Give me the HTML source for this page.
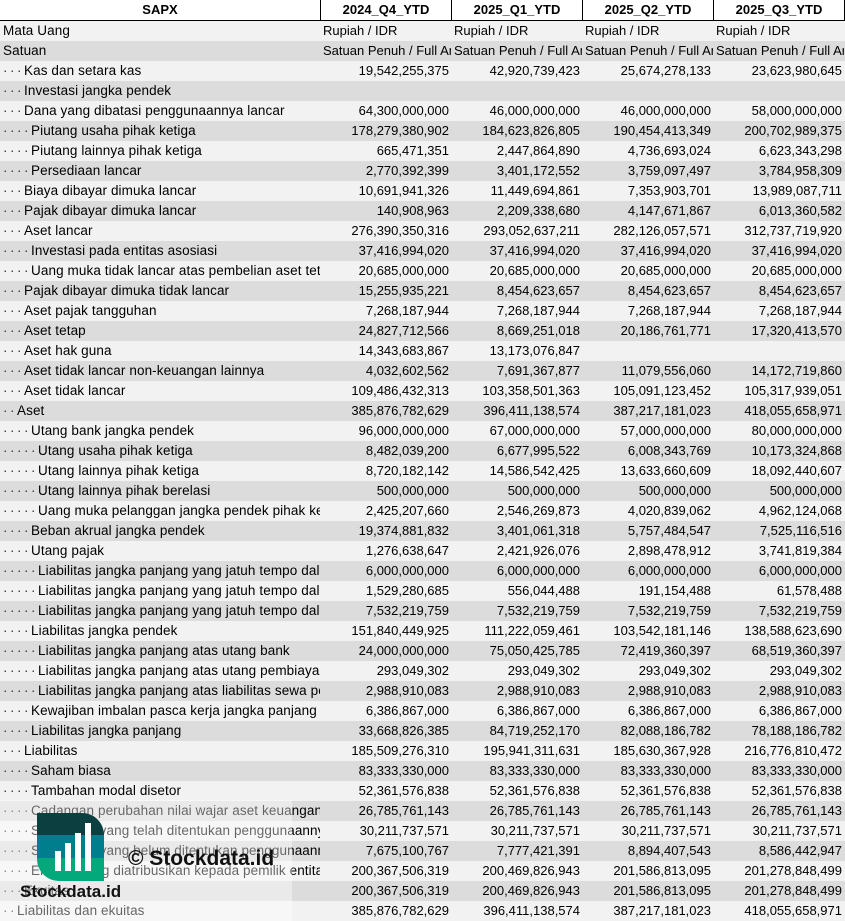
<!DOCTYPE html>
<html><head><meta charset="utf-8"><style>
*{margin:0;padding:0;box-sizing:border-box}
body{width:845px;height:921px;overflow:hidden;background:#fff;font-family:"Liberation Sans",sans-serif;font-size:13px;color:#000;position:relative}
.r{display:flex;height:20px;line-height:20px;white-space:nowrap}
.r:nth-child(odd){background:#f2f2f2}
.r:nth-child(even){background:#dcdcdc}
.l{width:320px;overflow:hidden;padding-left:3px;font-size:13.5px;letter-spacing:0.1px}
.v{width:131px;overflow:hidden;text-align:right;padding-right:2px}
.v.al{text-align:left;padding-left:3px;padding-right:0}
.d{display:inline-block;width:7px;color:#333}
.h{display:flex;height:21px;line-height:20px;font-weight:bold;border-bottom:1.5px solid #000;background:#fff}
.h div{text-align:center;border-right:1px solid #000}
.ov{position:absolute;left:0;top:800px;width:292px;height:121px;background:rgba(255,255,255,0.4)}
</style></head><body>
<div class="h"><div style="width:321px">SAPX</div><div style="width:131px">2024_Q4_YTD</div><div style="width:131px">2025_Q1_YTD</div><div style="width:131px">2025_Q2_YTD</div><div style="width:131px">2025_Q3_YTD</div></div>
<div id="t">
<div class="r"><div class="l">Mata Uang</div><div class="v al">Rupiah / IDR</div><div class="v al">Rupiah / IDR</div><div class="v al">Rupiah / IDR</div><div class="v al">Rupiah / IDR</div></div>
<div class="r"><div class="l">Satuan</div><div class="v al">Satuan Penuh / Full Amount</div><div class="v al">Satuan Penuh / Full Amount</div><div class="v al">Satuan Penuh / Full Amount</div><div class="v al">Satuan Penuh / Full Amount</div></div>
<div class="r"><div class="l"><span class="d">·</span><span class="d">·</span><span class="d">·</span>Kas dan setara kas</div><div class="v">19,542,255,375</div><div class="v">42,920,739,423</div><div class="v">25,674,278,133</div><div class="v">23,623,980,645</div></div>
<div class="r"><div class="l"><span class="d">·</span><span class="d">·</span><span class="d">·</span>Investasi jangka pendek</div><div class="v"></div><div class="v"></div><div class="v"></div><div class="v"></div></div>
<div class="r"><div class="l"><span class="d">·</span><span class="d">·</span><span class="d">·</span>Dana yang dibatasi penggunaannya lancar</div><div class="v">64,300,000,000</div><div class="v">46,000,000,000</div><div class="v">46,000,000,000</div><div class="v">58,000,000,000</div></div>
<div class="r"><div class="l"><span class="d">·</span><span class="d">·</span><span class="d">·</span><span class="d">·</span>Piutang usaha pihak ketiga</div><div class="v">178,279,380,902</div><div class="v">184,623,826,805</div><div class="v">190,454,413,349</div><div class="v">200,702,989,375</div></div>
<div class="r"><div class="l"><span class="d">·</span><span class="d">·</span><span class="d">·</span><span class="d">·</span>Piutang lainnya pihak ketiga</div><div class="v">665,471,351</div><div class="v">2,447,864,890</div><div class="v">4,736,693,024</div><div class="v">6,623,343,298</div></div>
<div class="r"><div class="l"><span class="d">·</span><span class="d">·</span><span class="d">·</span><span class="d">·</span>Persediaan lancar</div><div class="v">2,770,392,399</div><div class="v">3,401,172,552</div><div class="v">3,759,097,497</div><div class="v">3,784,958,309</div></div>
<div class="r"><div class="l"><span class="d">·</span><span class="d">·</span><span class="d">·</span>Biaya dibayar dimuka lancar</div><div class="v">10,691,941,326</div><div class="v">11,449,694,861</div><div class="v">7,353,903,701</div><div class="v">13,989,087,711</div></div>
<div class="r"><div class="l"><span class="d">·</span><span class="d">·</span><span class="d">·</span>Pajak dibayar dimuka lancar</div><div class="v">140,908,963</div><div class="v">2,209,338,680</div><div class="v">4,147,671,867</div><div class="v">6,013,360,582</div></div>
<div class="r"><div class="l"><span class="d">·</span><span class="d">·</span><span class="d">·</span>Aset lancar</div><div class="v">276,390,350,316</div><div class="v">293,052,637,211</div><div class="v">282,126,057,571</div><div class="v">312,737,719,920</div></div>
<div class="r"><div class="l"><span class="d">·</span><span class="d">·</span><span class="d">·</span><span class="d">·</span>Investasi pada entitas asosiasi</div><div class="v">37,416,994,020</div><div class="v">37,416,994,020</div><div class="v">37,416,994,020</div><div class="v">37,416,994,020</div></div>
<div class="r"><div class="l"><span class="d">·</span><span class="d">·</span><span class="d">·</span><span class="d">·</span>Uang muka tidak lancar atas pembelian aset tetap</div><div class="v">20,685,000,000</div><div class="v">20,685,000,000</div><div class="v">20,685,000,000</div><div class="v">20,685,000,000</div></div>
<div class="r"><div class="l"><span class="d">·</span><span class="d">·</span><span class="d">·</span>Pajak dibayar dimuka tidak lancar</div><div class="v">15,255,935,221</div><div class="v">8,454,623,657</div><div class="v">8,454,623,657</div><div class="v">8,454,623,657</div></div>
<div class="r"><div class="l"><span class="d">·</span><span class="d">·</span><span class="d">·</span>Aset pajak tangguhan</div><div class="v">7,268,187,944</div><div class="v">7,268,187,944</div><div class="v">7,268,187,944</div><div class="v">7,268,187,944</div></div>
<div class="r"><div class="l"><span class="d">·</span><span class="d">·</span><span class="d">·</span>Aset tetap</div><div class="v">24,827,712,566</div><div class="v">8,669,251,018</div><div class="v">20,186,761,771</div><div class="v">17,320,413,570</div></div>
<div class="r"><div class="l"><span class="d">·</span><span class="d">·</span><span class="d">·</span>Aset hak guna</div><div class="v">14,343,683,867</div><div class="v">13,173,076,847</div><div class="v"></div><div class="v"></div></div>
<div class="r"><div class="l"><span class="d">·</span><span class="d">·</span><span class="d">·</span>Aset tidak lancar non-keuangan lainnya</div><div class="v">4,032,602,562</div><div class="v">7,691,367,877</div><div class="v">11,079,556,060</div><div class="v">14,172,719,860</div></div>
<div class="r"><div class="l"><span class="d">·</span><span class="d">·</span><span class="d">·</span>Aset tidak lancar</div><div class="v">109,486,432,313</div><div class="v">103,358,501,363</div><div class="v">105,091,123,452</div><div class="v">105,317,939,051</div></div>
<div class="r"><div class="l"><span class="d">·</span><span class="d">·</span>Aset</div><div class="v">385,876,782,629</div><div class="v">396,411,138,574</div><div class="v">387,217,181,023</div><div class="v">418,055,658,971</div></div>
<div class="r"><div class="l"><span class="d">·</span><span class="d">·</span><span class="d">·</span><span class="d">·</span>Utang bank jangka pendek</div><div class="v">96,000,000,000</div><div class="v">67,000,000,000</div><div class="v">57,000,000,000</div><div class="v">80,000,000,000</div></div>
<div class="r"><div class="l"><span class="d">·</span><span class="d">·</span><span class="d">·</span><span class="d">·</span><span class="d">·</span>Utang usaha pihak ketiga</div><div class="v">8,482,039,200</div><div class="v">6,677,995,522</div><div class="v">6,008,343,769</div><div class="v">10,173,324,868</div></div>
<div class="r"><div class="l"><span class="d">·</span><span class="d">·</span><span class="d">·</span><span class="d">·</span><span class="d">·</span>Utang lainnya pihak ketiga</div><div class="v">8,720,182,142</div><div class="v">14,586,542,425</div><div class="v">13,633,660,609</div><div class="v">18,092,440,607</div></div>
<div class="r"><div class="l"><span class="d">·</span><span class="d">·</span><span class="d">·</span><span class="d">·</span><span class="d">·</span>Utang lainnya pihak berelasi</div><div class="v">500,000,000</div><div class="v">500,000,000</div><div class="v">500,000,000</div><div class="v">500,000,000</div></div>
<div class="r"><div class="l"><span class="d">·</span><span class="d">·</span><span class="d">·</span><span class="d">·</span><span class="d">·</span>Uang muka pelanggan jangka pendek pihak ketiga</div><div class="v">2,425,207,660</div><div class="v">2,546,269,873</div><div class="v">4,020,839,062</div><div class="v">4,962,124,068</div></div>
<div class="r"><div class="l"><span class="d">·</span><span class="d">·</span><span class="d">·</span><span class="d">·</span>Beban akrual jangka pendek</div><div class="v">19,374,881,832</div><div class="v">3,401,061,318</div><div class="v">5,757,484,547</div><div class="v">7,525,116,516</div></div>
<div class="r"><div class="l"><span class="d">·</span><span class="d">·</span><span class="d">·</span><span class="d">·</span>Utang pajak</div><div class="v">1,276,638,647</div><div class="v">2,421,926,076</div><div class="v">2,898,478,912</div><div class="v">3,741,819,384</div></div>
<div class="r"><div class="l"><span class="d">·</span><span class="d">·</span><span class="d">·</span><span class="d">·</span><span class="d">·</span>Liabilitas jangka panjang yang jatuh tempo dalam</div><div class="v">6,000,000,000</div><div class="v">6,000,000,000</div><div class="v">6,000,000,000</div><div class="v">6,000,000,000</div></div>
<div class="r"><div class="l"><span class="d">·</span><span class="d">·</span><span class="d">·</span><span class="d">·</span><span class="d">·</span>Liabilitas jangka panjang yang jatuh tempo dalam</div><div class="v">1,529,280,685</div><div class="v">556,044,488</div><div class="v">191,154,488</div><div class="v">61,578,488</div></div>
<div class="r"><div class="l"><span class="d">·</span><span class="d">·</span><span class="d">·</span><span class="d">·</span><span class="d">·</span>Liabilitas jangka panjang yang jatuh tempo dalam</div><div class="v">7,532,219,759</div><div class="v">7,532,219,759</div><div class="v">7,532,219,759</div><div class="v">7,532,219,759</div></div>
<div class="r"><div class="l"><span class="d">·</span><span class="d">·</span><span class="d">·</span><span class="d">·</span>Liabilitas jangka pendek</div><div class="v">151,840,449,925</div><div class="v">111,222,059,461</div><div class="v">103,542,181,146</div><div class="v">138,588,623,690</div></div>
<div class="r"><div class="l"><span class="d">·</span><span class="d">·</span><span class="d">·</span><span class="d">·</span><span class="d">·</span>Liabilitas jangka panjang atas utang bank</div><div class="v">24,000,000,000</div><div class="v">75,050,425,785</div><div class="v">72,419,360,397</div><div class="v">68,519,360,397</div></div>
<div class="r"><div class="l"><span class="d">·</span><span class="d">·</span><span class="d">·</span><span class="d">·</span><span class="d">·</span>Liabilitas jangka panjang atas utang pembiayaan</div><div class="v">293,049,302</div><div class="v">293,049,302</div><div class="v">293,049,302</div><div class="v">293,049,302</div></div>
<div class="r"><div class="l"><span class="d">·</span><span class="d">·</span><span class="d">·</span><span class="d">·</span><span class="d">·</span>Liabilitas jangka panjang atas liabilitas sewa pembiayaan</div><div class="v">2,988,910,083</div><div class="v">2,988,910,083</div><div class="v">2,988,910,083</div><div class="v">2,988,910,083</div></div>
<div class="r"><div class="l"><span class="d">·</span><span class="d">·</span><span class="d">·</span><span class="d">·</span>Kewajiban imbalan pasca kerja jangka panjang</div><div class="v">6,386,867,000</div><div class="v">6,386,867,000</div><div class="v">6,386,867,000</div><div class="v">6,386,867,000</div></div>
<div class="r"><div class="l"><span class="d">·</span><span class="d">·</span><span class="d">·</span><span class="d">·</span>Liabilitas jangka panjang</div><div class="v">33,668,826,385</div><div class="v">84,719,252,170</div><div class="v">82,088,186,782</div><div class="v">78,188,186,782</div></div>
<div class="r"><div class="l"><span class="d">·</span><span class="d">·</span><span class="d">·</span>Liabilitas</div><div class="v">185,509,276,310</div><div class="v">195,941,311,631</div><div class="v">185,630,367,928</div><div class="v">216,776,810,472</div></div>
<div class="r"><div class="l"><span class="d">·</span><span class="d">·</span><span class="d">·</span><span class="d">·</span>Saham biasa</div><div class="v">83,333,330,000</div><div class="v">83,333,330,000</div><div class="v">83,333,330,000</div><div class="v">83,333,330,000</div></div>
<div class="r"><div class="l"><span class="d">·</span><span class="d">·</span><span class="d">·</span><span class="d">·</span>Tambahan modal disetor</div><div class="v">52,361,576,838</div><div class="v">52,361,576,838</div><div class="v">52,361,576,838</div><div class="v">52,361,576,838</div></div>
<div class="r"><div class="l"><span class="d">·</span><span class="d">·</span><span class="d">·</span><span class="d">·</span>Cadangan perubahan nilai wajar aset keuangan</div><div class="v">26,785,761,143</div><div class="v">26,785,761,143</div><div class="v">26,785,761,143</div><div class="v">26,785,761,143</div></div>
<div class="r"><div class="l"><span class="d">·</span><span class="d">·</span><span class="d">·</span><span class="d">·</span>Saldo laba yang telah ditentukan penggunaannya</div><div class="v">30,211,737,571</div><div class="v">30,211,737,571</div><div class="v">30,211,737,571</div><div class="v">30,211,737,571</div></div>
<div class="r"><div class="l"><span class="d">·</span><span class="d">·</span><span class="d">·</span><span class="d">·</span>Saldo laba yang belum ditentukan penggunaannya</div><div class="v">7,675,100,767</div><div class="v">7,777,421,391</div><div class="v">8,894,407,543</div><div class="v">8,586,442,947</div></div>
<div class="r"><div class="l"><span class="d">·</span><span class="d">·</span><span class="d">·</span><span class="d">·</span>Ekuitas yang diatribusikan kepada pemilik entitas</div><div class="v">200,367,506,319</div><div class="v">200,469,826,943</div><div class="v">201,586,813,095</div><div class="v">201,278,848,499</div></div>
<div class="r"><div class="l"><span class="d">·</span><span class="d">·</span><span class="d">·</span>Ekuitas</div><div class="v">200,367,506,319</div><div class="v">200,469,826,943</div><div class="v">201,586,813,095</div><div class="v">201,278,848,499</div></div>
<div class="r"><div class="l"><span class="d">·</span><span class="d">·</span>Liabilitas dan ekuitas</div><div class="v">385,876,782,629</div><div class="v">396,411,138,574</div><div class="v">387,217,181,023</div><div class="v">418,055,658,971</div></div>
</div>
<div class="ov"></div>
<svg style="position:absolute;left:37px;top:813px" width="67" height="68" viewBox="0 0 67 68">
<defs><clipPath id="c"><path d="M0 0H45A22 22 0 0 1 67 22V68H22A22 22 0 0 1 0 46Z"/></clipPath></defs>
<g clip-path="url(#c)">
<rect width="67" height="23" fill="#0b3f40"/>
<rect y="22" width="67" height="24" fill="#017e8d"/>
<rect y="45" width="67" height="23" fill="#03a97b"/>
</g>
<rect x="18" y="38" width="6" height="20" fill="#fff"/>
<rect x="28" y="30" width="6" height="28" fill="#fff"/>
<rect x="38" y="20" width="6" height="38" fill="#fff"/>
<rect x="48" y="10" width="6" height="48" fill="#fff"/>
</svg>
<div style="position:absolute;left:128px;top:846px;font-size:21px;font-weight:bold;line-height:26px;color:#111">© Stockdata.id</div>
<div style="position:absolute;left:20px;top:881px;font-size:17px;font-weight:bold;line-height:22px;color:#111">Stockdata.id</div>
</body></html>
